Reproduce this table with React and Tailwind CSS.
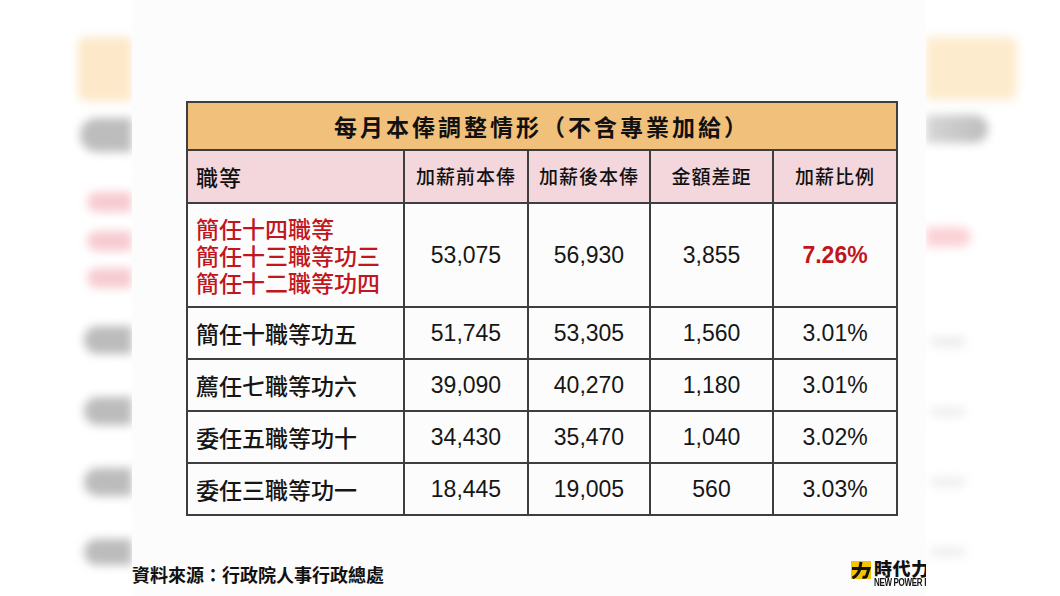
import React from 'react'

const rows = [
  { grade: ['簡任十四職等', '簡任十三職等功三', '簡任十二職等功四'], before: '53,075', after: '56,930', diff: '3,855', rate: '7.26%', hl: true },
  { grade: ['簡任十職等功五'], before: '51,745', after: '53,305', diff: '1,560', rate: '3.01%' },
  { grade: ['薦任七職等功六'], before: '39,090', after: '40,270', diff: '1,180', rate: '3.01%' },
  { grade: ['委任五職等功十'], before: '34,430', after: '35,470', diff: '1,040', rate: '3.02%' },
  { grade: ['委任三職等功一'], before: '18,445', after: '19,005', diff: '560', rate: '3.03%' },
]

const cjk = { fontFamily: '"Noto Sans CJK TC", "Noto Sans", sans-serif' }
const num = { fontFamily: '"Liberation Sans", Arial, sans-serif' }

function Blob({ className }) {
  return <div className={`shrink-0 blur-[5px] ${className}`} />
}

function Logo() {
  return (
    <div className="w-[75px] shrink-0 flex items-start gap-[3px] whitespace-nowrap">
      <svg width="20" height="18" viewBox="0 0 20 18" className="shrink-0">
        <rect width="20" height="18" fill="#f4c400" />
        <path d="M1 7.5 H18 L15.5 15 Q14.5 17 11.5 16" fill="none" stroke="#111" strokeWidth="3" />
        <path d="M10 1 L8.5 9 Q6.5 14.5 1.5 17" fill="none" stroke="#111" strokeWidth="3" />
      </svg>
      <div className="flex flex-col leading-none -mt-[2px]">
        <span className="text-[18px] leading-[19px] font-black text-[#111] tracking-[0.5px]" style={cjk}>時代力量</span>
        <span className="text-[10px] leading-[10px] font-bold text-[#111] tracking-[-0.4px] scale-x-[0.8] origin-left" style={num}>NEW POWER PARTY</span>
      </div>
    </div>
  )
}

export default function App() {
  const cell = 'border-2 border-[#3e3e3e]'
  return (
    <div className="w-[1060px] h-[596px] flex bg-white overflow-hidden" style={cjk}>
      {/* blurred backdrop, left */}
      <aside className="w-[132px] shrink-0 flex flex-col items-end pt-[37px]">
        <Blob className="w-[54px] h-[64px] rounded-l-lg bg-[#fde8c9]" />
        <Blob className="w-[52px] h-[34px] mt-[17px] rounded-l-full bg-[#bdbdbd]" />
        <Blob className="w-[45px] h-[20px] mt-[40px] rounded-l-full bg-[#f6cbd0]" />
        <Blob className="w-[45px] h-[20px] mt-[19px] rounded-l-full bg-[#f6cbd0]" />
        <Blob className="w-[45px] h-[20px] mt-[17px] rounded-l-full bg-[#f6cbd0]" />
        <Blob className="w-[48px] h-[28px] mt-[38px] rounded-l-full bg-[#bcbcbc]" />
        <Blob className="w-[48px] h-[28px] mt-[43px] rounded-l-full bg-[#bcbcbc]" />
        <Blob className="w-[48px] h-[28px] mt-[43px] rounded-l-full bg-[#bcbcbc]" />
        <Blob className="w-[48px] h-[26px] mt-[43px] rounded-l-full bg-[#bcbcbc]" />
      </aside>

      <main className="w-[794px] shrink-0 relative z-10 bg-[#fcfcfc] overflow-hidden flex flex-col">
        <div className="pt-[101px] pl-[54px]">
          <table className="border-collapse table-fixed w-[710px] border-2 border-[#3e3e3e]">
            <colgroup>
              <col className="w-[217px]" />
              <col className="w-[124px]" />
              <col className="w-[122px]" />
              <col className="w-[123px]" />
              <col className="w-[124px]" />
            </colgroup>
            <thead>
              <tr className="h-[48px] bg-[#f1c17b]">
                <th colSpan={5} className={`${cell} text-[23px] font-bold text-[#111] tracking-[3px] text-center`}>
                  每月本俸調整情形（不含專業加給）
                </th>
              </tr>
              <tr className="h-[53px] bg-[#f3d7dc] text-[#111]">
                <th className={`${cell} text-left pl-[8px] text-[22px] font-medium tracking-[1px]`}>職等</th>
                {['加薪前本俸', '加薪後本俸', '金額差距', '加薪比例'].map(h => (
                  <th key={h} className={`${cell} text-center text-[19px] font-medium tracking-[1px]`}>{h}</th>
                ))}
              </tr>
            </thead>
            <tbody className="text-[#161616]">
              {rows.map((r, i) => (
                <tr key={i} className={r.hl ? 'h-[104px]' : 'h-[52px]'}>
                  <td className={`${cell} pl-[8px] text-[23px] leading-[27px] font-medium ${r.hl ? 'text-[#c1161c]' : ''}`}>
                    {r.grade.map(g => <div key={g}>{g}</div>)}
                  </td>
                  <td className={`${cell} text-center text-[23px]`} style={num}>{r.before}</td>
                  <td className={`${cell} text-center text-[23px]`} style={num}>{r.after}</td>
                  <td className={`${cell} text-center text-[23px]`} style={num}>{r.diff}</td>
                  <td className={`${cell} text-center text-[23px] ${r.hl ? 'font-bold text-[#c1161c]' : ''}`} style={num}>{r.rate}</td>
                </tr>
              ))}
            </tbody>
          </table>
        </div>

        <footer className="mt-[45px] flex items-start justify-between">
          <span className="text-[18px] font-semibold text-[#111] leading-[24px] mt-[1px]">資料來源：行政院人事行政總處</span>
          <Logo />
        </footer>
      </main>

      {/* blurred backdrop, right */}
      <aside className="flex-1 flex flex-col items-start pt-[37px]">
        <Blob className="w-[91px] h-[63px] rounded-r-lg bg-[#fdebcd]" />
        <Blob className="w-[62px] h-[28px] mt-[15px] rounded-r-full bg-gradient-to-r from-[#d6d6d6] to-[#bdbdbd]" />
        <Blob className="w-[45px] h-[20px] mt-[84px] rounded-r-full bg-[#fbd2d6]" />
        <Blob className="w-[36px] h-[10px] mt-[90px] ml-[4px] rounded-full bg-[#ececec]" />
        <Blob className="w-[36px] h-[10px] mt-[60px] ml-[4px] rounded-full bg-[#efefef]" />
        <Blob className="w-[36px] h-[10px] mt-[60px] ml-[4px] rounded-full bg-[#efefef]" />
        <Blob className="w-[36px] h-[10px] mt-[60px] ml-[4px] rounded-full bg-[#efefef]" />
      </aside>
    </div>
  )
}
